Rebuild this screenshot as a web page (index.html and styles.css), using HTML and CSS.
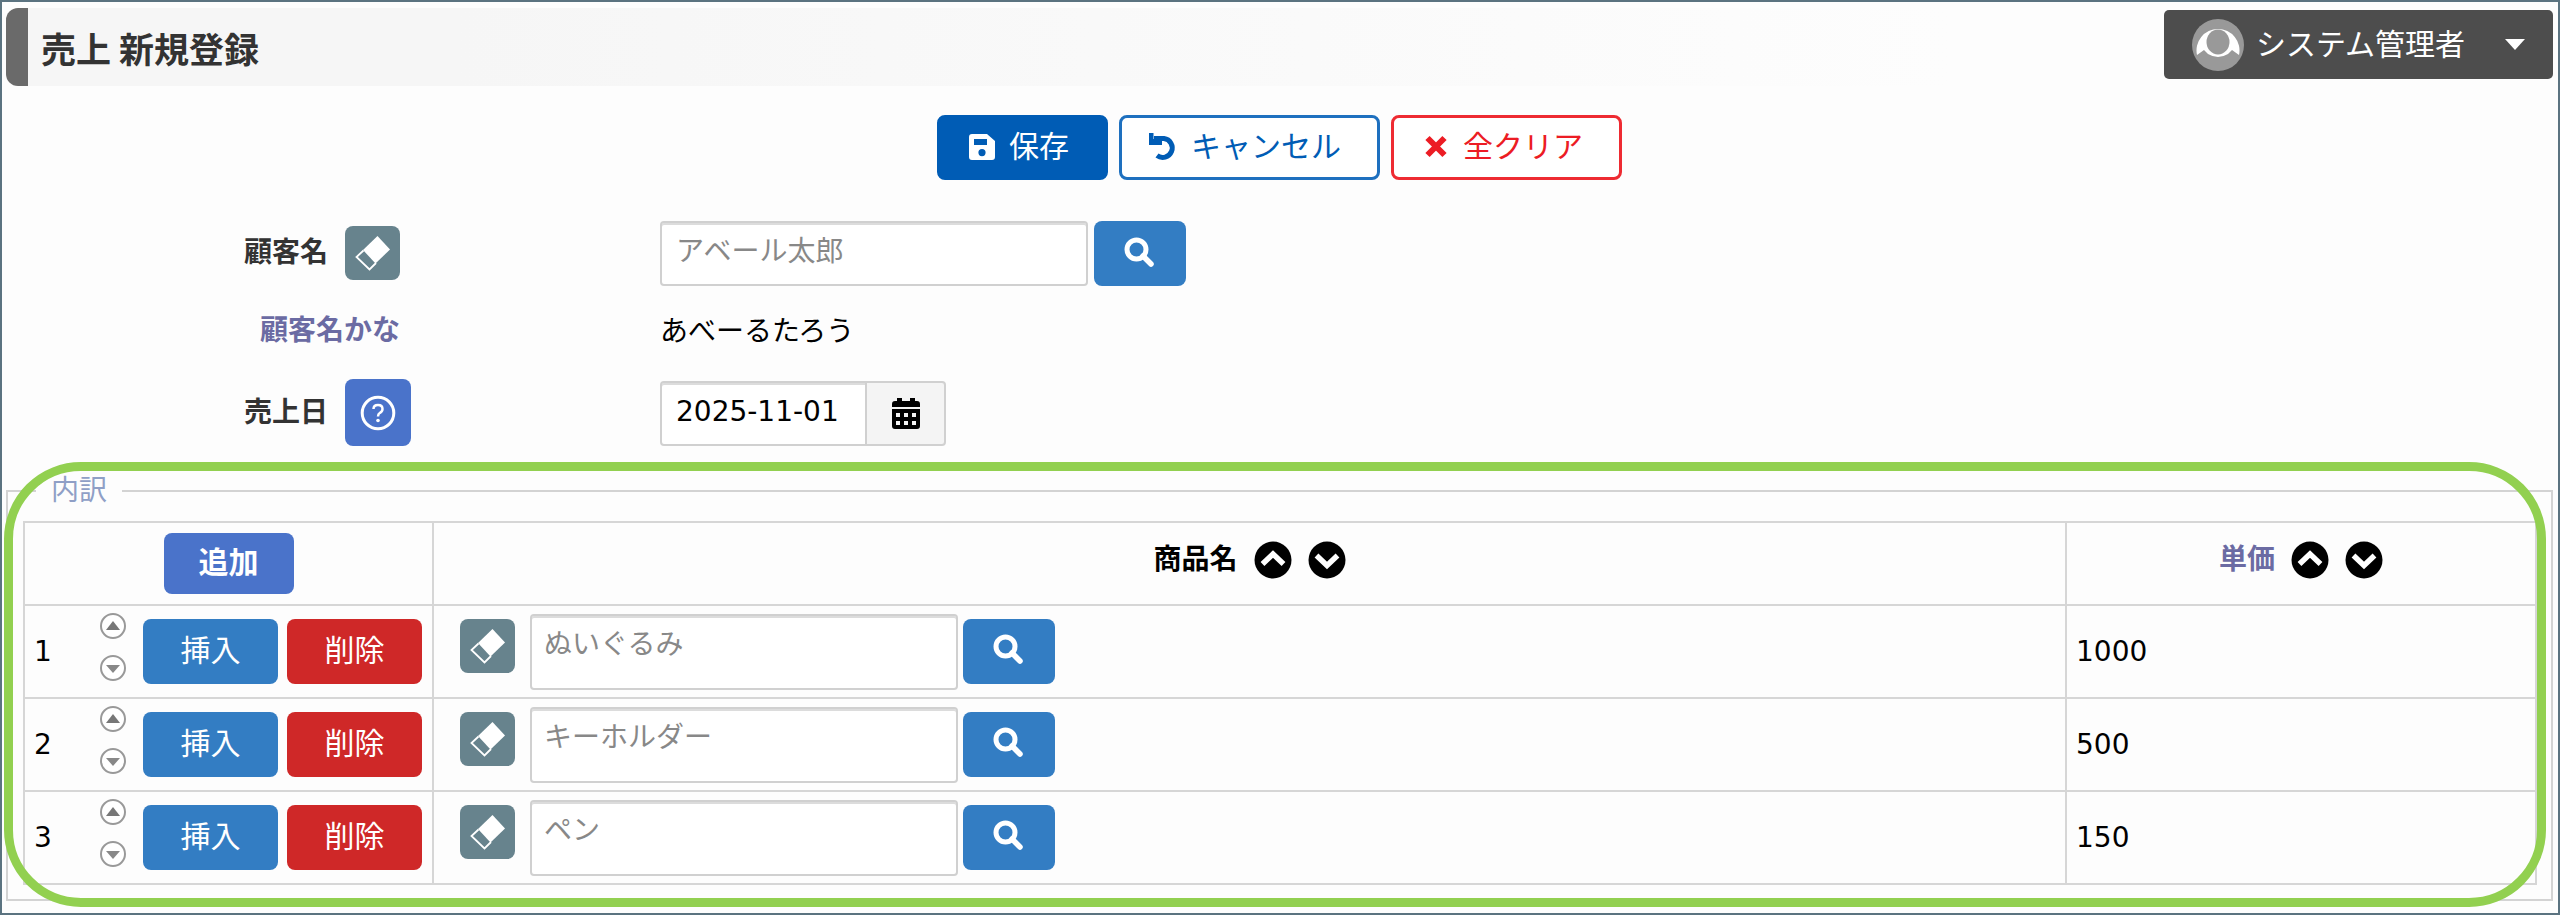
FILE: index.html
```html
<!DOCTYPE html>
<html lang="ja">
<head>
    <meta charset="UTF-8">
    <meta name="viewport" content="width=device-width, initial-scale=1.0">
    <title>売上 新規登録</title>
    <link rel="stylesheet" href="styles.css">
</head>
<body>
    <!-- shared icons -->
    <svg class="icon-defs" aria-hidden="true">
        <symbol id="icon-eraser" viewBox="0 0 36 36">
            <path d="M22.500 1 L35 14.500 L20.500 28.500 L8 15 Z" fill="#fff"/>
            <path d="M8.500 15.500 L1.500 22 L14.500 34.500 L21 28" fill="none" stroke="#fff" stroke-width="1.800"/>
        </symbol>
        <symbol id="icon-search" viewBox="0 0 30 30">
            <circle cx="12.500" cy="12.500" r="9.500" fill="none" stroke="#fff" stroke-width="5"/>
            <path d="M19 19 L27 27" stroke="#fff" stroke-width="5.500" stroke-linecap="round"/>
        </symbol>
        <symbol id="icon-up" viewBox="0 0 38 38">
            <circle cx="19" cy="19" r="18.500"/>
            <path d="M8.500 23 L19 13 L29.500 23" fill="none" stroke="#fff" stroke-width="5.500"/>
        </symbol>
        <symbol id="icon-down" viewBox="0 0 38 38">
            <circle cx="19" cy="19" r="18.500"/>
            <path d="M8.500 14.500 L19 24.500 L29.500 14.500" fill="none" stroke="#fff" stroke-width="5.500"/>
        </symbol>
        <symbol id="icon-move-up" viewBox="0 0 26 26">
            <circle cx="13" cy="13" r="12" fill="#fff" stroke="#999" stroke-width="2"/>
            <path d="M6 17 L13 8 L20 17 Z" fill="#777"/>
        </symbol>
        <symbol id="icon-move-down" viewBox="0 0 26 26">
            <circle cx="13" cy="13" r="12" fill="#fff" stroke="#999" stroke-width="2"/>
            <path d="M6 10 L13 18 L20 10 Z" fill="#888"/>
        </symbol>
    </svg>

    <header class="page-header">
        <h1 class="page-title">売上 新規登録</h1>
        <button type="button" class="user-menu">
            <svg class="avatar" viewBox="0 0 52 52">
                <circle cx="26" cy="26" r="26" fill="#999"/>
                <path d="M5 36 A21.500 21.500 0 1 1 47 36 L40 31 L36 35 Q26 41 16 35 L12 31 Z" fill="#fff"/>
                <ellipse cx="26" cy="23" rx="11.500" ry="12.500" fill="#999"/>
            </svg>
            <span class="user-name">システム管理者</span>
            <svg class="caret" viewBox="0 0 20 11"><path d="M0 0 H20 L10 11 Z" fill="#fff"/></svg>
        </button>
    </header>

    <main>
        <div class="actions">
            <button type="button" class="action-button save">
                <svg class="action-icon" viewBox="0 0 30 30">
                    <path fill-rule="evenodd" fill="#fff" d="M5 2 H20 L28 9 V25 Q28 28 25 28 H5 Q2 28 2 25 V5 Q2 2 5 2 Z M7 7 V13 H20 V7 Z M15 17 A3.600 3.600 0 1 0 15 24.200 A3.600 3.600 0 1 0 15 17 Z"/>
                </svg>
                保存
            </button>
            <button type="button" class="action-button cancel">
                <svg class="action-icon" viewBox="0 0 30 30">
                    <path d="M5 6.500 H15 A9.500 9.500 0 1 1 8 23.500" fill="none" stroke="#005cb5" stroke-width="5"/>
                    <path d="M0 1 H4.500 V7 H13 V13 H0 Z" fill="#005cb5"/>
                </svg>
                キャンセル
            </button>
            <button type="button" class="action-button clear">
                <svg class="action-icon" viewBox="0 0 30 30">
                    <path d="M6.500 6 L23.500 23 M23.500 6 L6.500 23" stroke="#ec1c24" stroke-width="6"/>
                </svg>
                全クリア
            </button>
        </div>

        <div class="form">
            <div class="form-row">
                <div class="form-label">
                    <label for="customer">顧客名</label>
                    <span class="tool-slot">
                        <button type="button" class="erase-button" aria-label="消去"><svg class="eraser-icon"><use href="#icon-eraser"/></svg></button>
                    </span>
                </div>
                <div class="form-field">
                    <input type="text" id="customer" class="text-input" placeholder="アベール太郎">
                    <button type="button" class="search-button" aria-label="検索"><svg class="search-icon"><use href="#icon-search"/></svg></button>
                </div>
            </div>
            <div class="form-row kana-row">
                <div class="form-label sub-label">顧客名かな</div>
                <div class="form-field">あべーるたろう</div>
            </div>
            <div class="form-row">
                <div class="form-label">
                    <label for="salesDate">売上日</label>
                    <span class="tool-slot">
                        <button type="button" class="help-button" aria-label="ヘルプ">
                            <svg class="help-icon" viewBox="0 0 36 36">
                                <circle cx="18" cy="18" r="15.800" fill="none" stroke="#fff" stroke-width="3"/>
                                <path d="M13.500 14 Q13.500 10 18 10 Q22.500 10 22.500 14 Q22.500 16.500 20 17.800 Q18 19 18 21.500" fill="none" stroke="#fff" stroke-width="2.500"/>
                                <circle cx="18" cy="25.500" r="1.800" fill="#fff"/>
                            </svg>
                        </button>
                    </span>
                </div>
                <div class="form-field date-field">
                    <input type="text" id="salesDate" class="text-input date-input" value="2025-11-01">
                    <button type="button" class="calendar-button" aria-label="カレンダー">
                        <svg class="calendar-icon" viewBox="0 0 28 32">
                            <path d="M5 0 H10 V3 H18 V0 H23 V3 H25 Q28 3 28 6 V9 H0 V6 Q0 3 3 3 H5 Z"/>
                            <path fill-rule="evenodd" d="M0 11 H28 V28 Q28 31 25 31 H3 Q0 31 0 28 Z M4 15 V19 H8 V15 Z M12 15 V19 H16 V15 Z M20 15 V19 H24 V15 Z M4 23 V27 H8 V23 Z M12 23 V27 H16 V23 Z M20 23 V27 H24 V23 Z"/>
                        </svg>
                    </button>
                </div>
            </div>
        </div>

        <div class="detail">
            <fieldset class="detail-set">
                <legend>内訳</legend>
                <table>
                    <tr>
                        <th class="col-tools"><button type="button" class="add-button">追加</button></th>
                        <th>
                            <div class="heading">
                                商品名
                                <button type="button" class="sort-button" aria-label="昇順"><svg><use href="#icon-up"/></svg></button>
                                <button type="button" class="sort-button" aria-label="降順"><svg><use href="#icon-down"/></svg></button>
                            </div>
                        </th>
                        <th class="col-price">
                            <div class="heading sub-label">
                                単価
                                <button type="button" class="sort-button" aria-label="昇順"><svg><use href="#icon-up"/></svg></button>
                                <button type="button" class="sort-button" aria-label="降順"><svg><use href="#icon-down"/></svg></button>
                            </div>
                        </th>
                    </tr>
                    <tr>
                        <td>
                            <div class="row-tools">
                                <span class="row-number">1</span>
                                <div class="move">
                                    <button type="button" class="move-button" aria-label="上へ"><svg><use href="#icon-move-up"/></svg></button>
                                    <button type="button" class="move-button" aria-label="下へ"><svg><use href="#icon-move-down"/></svg></button>
                                </div>
                                <button type="button" class="row-button insert">挿入</button>
                                <button type="button" class="row-button delete">削除</button>
                            </div>
                        </td>
                        <td>
                            <div class="product">
                                <button type="button" class="erase-button" aria-label="消去"><svg class="eraser-icon"><use href="#icon-eraser"/></svg></button>
                                <input type="text" class="text-input product-input" placeholder="ぬいぐるみ" aria-label="商品名">
                                <button type="button" class="search-button" aria-label="検索"><svg class="search-icon"><use href="#icon-search"/></svg></button>
                            </div>
                        </td>
                        <td>1000</td>
                    </tr>
                    <tr>
                        <td>
                            <div class="row-tools">
                                <span class="row-number">2</span>
                                <div class="move">
                                    <button type="button" class="move-button" aria-label="上へ"><svg><use href="#icon-move-up"/></svg></button>
                                    <button type="button" class="move-button" aria-label="下へ"><svg><use href="#icon-move-down"/></svg></button>
                                </div>
                                <button type="button" class="row-button insert">挿入</button>
                                <button type="button" class="row-button delete">削除</button>
                            </div>
                        </td>
                        <td>
                            <div class="product">
                                <button type="button" class="erase-button" aria-label="消去"><svg class="eraser-icon"><use href="#icon-eraser"/></svg></button>
                                <input type="text" class="text-input product-input" placeholder="キーホルダー" aria-label="商品名">
                                <button type="button" class="search-button" aria-label="検索"><svg class="search-icon"><use href="#icon-search"/></svg></button>
                            </div>
                        </td>
                        <td>500</td>
                    </tr>
                    <tr>
                        <td>
                            <div class="row-tools">
                                <span class="row-number">3</span>
                                <div class="move">
                                    <button type="button" class="move-button" aria-label="上へ"><svg><use href="#icon-move-up"/></svg></button>
                                    <button type="button" class="move-button" aria-label="下へ"><svg><use href="#icon-move-down"/></svg></button>
                                </div>
                                <button type="button" class="row-button insert">挿入</button>
                                <button type="button" class="row-button delete">削除</button>
                            </div>
                        </td>
                        <td>
                            <div class="product">
                                <button type="button" class="erase-button" aria-label="消去"><svg class="eraser-icon"><use href="#icon-eraser"/></svg></button>
                                <input type="text" class="text-input product-input" placeholder="ペン" aria-label="商品名">
                                <button type="button" class="search-button" aria-label="検索"><svg class="search-icon"><use href="#icon-search"/></svg></button>
                            </div>
                        </td>
                        <td>150</td>
                    </tr>
                </table>
            </fieldset>
            <div class="highlight"></div>
        </div>
    </main>
</body>
</html>
```

FILE: styles.css
```css
* {
    box-sizing: border-box;
}
body {
    margin: 0;
    min-height: 100vh;
    padding: 6px 5px 11px 4px;
    border: 2px solid #5b7380;
    background-color: #fdfdfd;
    color: #000;
    font-family: "DejaVu Sans", "Noto Sans CJK JP", sans-serif;
    font-size: 28px;
    line-height: 40px;
}
button, input {
    font-family: inherit;
    font-size: inherit;
    line-height: inherit;
}
button {
    display: flex;
    align-items: center;
    justify-content: center;
    flex: none;
    margin: 0;
    padding: 0;
    border: none;
    border-radius: 8px;
    cursor: pointer;
}
svg {
    display: block;
    flex: none;
}
.icon-defs {
    position: absolute;
    width: 0;
    height: 0;
}

/* header */
.page-header {
    display: flex;
    align-items: flex-start;
    justify-content: space-between;
}
.page-title {
    flex: 1;
    margin: 0;
    padding: 16px 0 14px 13px;
    border-left: 22px solid #6a6a6a;
    border-radius: 12px 0 0 12px;
    background: linear-gradient(to right, #f6f6f6 20%, #fdfdfd 90%);
    color: #333;
    font-family: "Noto Sans CJK JP", sans-serif;
    font-size: 35px;
    line-height: 48px;
}
.user-menu {
    width: 389px;
    height: 69px;
    margin-top: 2px;
    padding: 0 28px;
    border-radius: 5px;
    background-color: #4d4d4d;
    color: #fff;
    font-size: 30px;
    justify-content: flex-start;
}
.avatar {
    width: 52px;
    height: 52px;
}
.user-name {
    margin-left: 12px;
}
.caret {
    width: 20px;
    height: 11px;
    margin-left: auto;
}

/* action buttons */
.actions {
    display: flex;
    justify-content: center;
    gap: 11px;
    margin-top: 29px;
}
.action-button {
    height: 65px;
    gap: 12px;
    padding: 0 36px 2px 27px;
    border: 3px solid;
    background-color: #fff;
    font-size: 30px;
}
.action-icon {
    width: 30px;
    height: 30px;
}
.save {
    border-color: #005cb5;
    background-color: #005cb5;
    color: #fff;
}
.cancel {
    border-color: #1e70bf;
    color: #005cb5;
}
.clear {
    border-color: #ee2b32;
    color: #ec1c24;
}

/* form */
.form {
    margin-top: 41px;
}
.form-row {
    display: flex;
    align-items: center;
}
.form-label {
    display: flex;
    align-items: center;
    justify-content: flex-end;
    gap: 17px;
    width: 394px;
    margin-right: 260px;
    padding-bottom: 2px;
    color: #333;
    font-weight: bold;
}
.sub-label {
    color: #6b6ba3;
}
.kana-row {
    padding: 25px 0 26px;
}
.tool-slot {
    width: 55px;
}
.form-field {
    display: flex;
    gap: 6px;
}
.text-input {
    width: 428px;
    height: 65px;
    padding: 0 14px 4px;
    border: 2px solid #d0d0d0;
    border-radius: 4px;
    background-color: #fff;
    box-shadow: inset 0 2px 0 #dcdcdc;
    color: #000;
}
.text-input::placeholder {
    color: #888;
    opacity: 1;
}
.date-field {
    gap: 0;
}
.date-input {
    width: 207px;
    border-radius: 4px 0 0 4px;
}
.calendar-button {
    width: 81px;
    height: 65px;
    margin-left: -2px;
    border: 2px solid #d0d0d0;
    border-radius: 0 4px 4px 0;
    background-color: #f4f4f4;
}
.calendar-icon {
    width: 28px;
    height: 32px;
}
.erase-button {
    width: 55px;
    height: 54px;
    background-color: #67838d;
}
.eraser-icon {
    width: 36px;
    height: 36px;
}
.search-button {
    width: 92px;
    height: 65px;
    padding: 0 2px 4px 0;
    background-color: #337dc3;
}
.search-icon {
    width: 30px;
    height: 30px;
}
.help-button {
    width: 66px;
    height: 67px;
    background-color: #4a73ca;
}
.help-icon {
    width: 36px;
    height: 36px;
}

/* detail table */
.detail {
    position: relative;
    margin-top: 23px;
}
.detail-set {
    margin: 0;
    padding: 10px 14px 14px 15px;
    border: 2px solid #d3d3d3;
}
legend {
    margin-left: 13px;
    padding: 0 15px;
    color: #8f9fc6;
}
table {
    width: 100%;
    border-collapse: collapse;
    table-layout: fixed;
}
th, td {
    padding: 0 9px;
    border: 2px solid #d6d6d6;
    text-align: left;
}
th {
    height: 83px;
}
td {
    height: 93px;
}
.col-tools {
    width: 409px;
}
.col-price {
    width: 470px;
}
.add-button {
    width: 130px;
    height: 61px;
    margin: 0 auto;
    padding-bottom: 2px;
    background-color: #4a73ca;
    color: #fff;
    font-size: 30px;
    font-weight: bold;
}
.heading {
    display: flex;
    align-items: center;
    justify-content: center;
    gap: 16px;
    padding-bottom: 7px;
}
.sort-button {
    background: none;
}
.sort-button svg {
    width: 38px;
    height: 38px;
}
.row-tools {
    display: flex;
    align-items: center;
    gap: 9px;
}
.row-number {
    width: 57px;
}
.move {
    display: flex;
    flex-direction: column;
    gap: 16px;
    padding-bottom: 10px;
}
.move-button {
    background: none;
}
.move-button svg {
    width: 26px;
    height: 26px;
}
.row-button {
    width: 135px;
    height: 65px;
    padding-bottom: 2px;
    color: #fff;
    font-size: 30px;
}
.insert {
    margin-left: 8px;
    background-color: #337dc3;
}
.delete {
    background-color: #cf2828;
}
.product {
    display: flex;
    align-items: flex-start;
    padding-left: 17px;
}
.product .erase-button,
.product .search-button {
    margin-top: 5px;
}
.product-input {
    height: 76px;
    margin: 0 5px 0 15px;
    padding: 0 12px 14px;
}

/* frame round the detail table */
.highlight {
    position: absolute;
    top: -9px;
    right: 7px;
    bottom: -6px;
    left: -2px;
    border: 9px solid #92d050;
    border-radius: 77px;
    pointer-events: none;
}
```
